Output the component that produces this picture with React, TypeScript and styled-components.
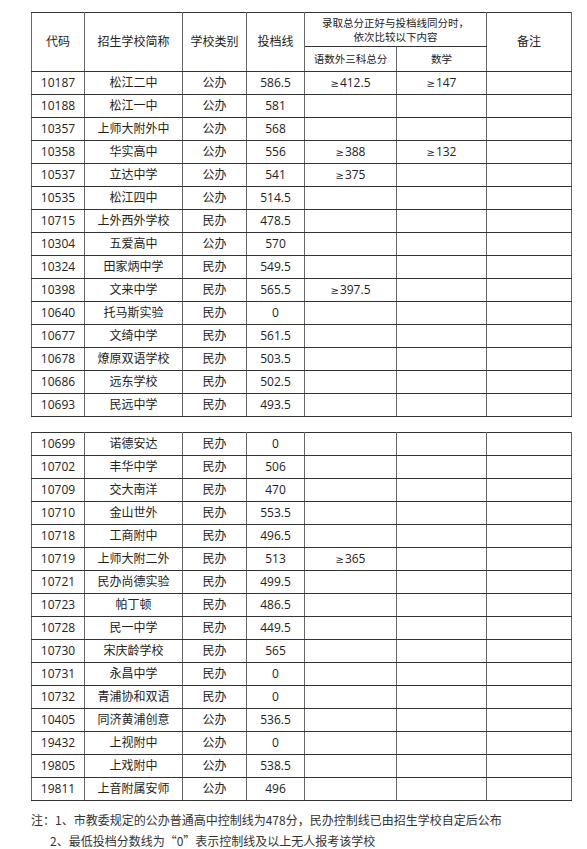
import React from "react";
import styled, { createGlobalStyle } from "styled-components";

type Row = {
  code: string;
  name: string;
  kind: string;
  line: string;
  total?: string;
  math?: string;
};

const firstRows: Row[] = [
  { code: "10187", name: "松江二中", kind: "公办", line: "586.5", total: "≥412.5", math: "≥147" },
  { code: "10188", name: "松江一中", kind: "公办", line: "581" },
  { code: "10357", name: "上师大附外中", kind: "公办", line: "568" },
  { code: "10358", name: "华实高中", kind: "公办", line: "556", total: "≥388", math: "≥132" },
  { code: "10537", name: "立达中学", kind: "公办", line: "541", total: "≥375" },
  { code: "10535", name: "松江四中", kind: "公办", line: "514.5" },
  { code: "10715", name: "上外西外学校", kind: "民办", line: "478.5" },
  { code: "10304", name: "五爱高中", kind: "公办", line: "570" },
  { code: "10324", name: "田家炳中学", kind: "民办", line: "549.5" },
  { code: "10398", name: "文来中学", kind: "民办", line: "565.5", total: "≥397.5" },
  { code: "10640", name: "托马斯实验", kind: "民办", line: "0" },
  { code: "10677", name: "文绮中学", kind: "民办", line: "561.5" },
  { code: "10678", name: "燎原双语学校", kind: "民办", line: "503.5" },
  { code: "10686", name: "远东学校", kind: "民办", line: "502.5" },
  { code: "10693", name: "民远中学", kind: "民办", line: "493.5" },
];

const secondRows: Row[] = [
  { code: "10699", name: "诺德安达", kind: "民办", line: "0" },
  { code: "10702", name: "丰华中学", kind: "民办", line: "506" },
  { code: "10709", name: "交大南洋", kind: "民办", line: "470" },
  { code: "10710", name: "金山世外", kind: "民办", line: "553.5" },
  { code: "10718", name: "工商附中", kind: "民办", line: "496.5" },
  { code: "10719", name: "上师大附二外", kind: "民办", line: "513", total: "≥365" },
  { code: "10721", name: "民办尚德实验", kind: "民办", line: "499.5" },
  { code: "10723", name: "帕丁顿", kind: "民办", line: "486.5" },
  { code: "10728", name: "民一中学", kind: "民办", line: "449.5" },
  { code: "10730", name: "宋庆龄学校", kind: "民办", line: "565" },
  { code: "10731", name: "永昌中学", kind: "民办", line: "0" },
  { code: "10732", name: "青浦协和双语", kind: "民办", line: "0" },
  { code: "10405", name: "同济黄浦创意", kind: "公办", line: "536.5" },
  { code: "19432", name: "上视附中", kind: "公办", line: "0" },
  { code: "19805", name: "上戏附中", kind: "公办", line: "538.5" },
  { code: "19811", name: "上音附属安师", kind: "公办", line: "496" },
];

const colWidths = [53, 98, 64, 58, 92, 90, 85];

const GlobalStyle = createGlobalStyle`
  html, body {
    margin: 0;
    padding: 0;
    background: #fff;
  }
  body {
    font-family: "Open Sans", "DejaVu Sans", "Noto Sans CJK SC", sans-serif;
    color: #222;
  }
`;

const Page = styled.div`
  display: flex;
  flex-direction: column;
  padding: 12px 0 0 31px;
  width: 540px;
`;

const Table = styled.table<{ $gap?: number }>`
  border-collapse: collapse;
  table-layout: fixed;
  width: 540px;
  margin-bottom: ${({ $gap }) => $gap ?? 0}px;
  border: 1px solid #555;
`;

const Cell = styled.td<{ $h?: number; $small?: boolean }>`
  height: ${({ $h }) => $h ?? 22}px;
  padding: 0;
  text-align: center;
  vertical-align: middle;
  font-size: ${({ $small }) => ($small ? 10.5 : 12)}px;
  line-height: ${({ $small }) => ($small ? 14 : 16)}px;
  border-top: 1px solid #333;
  border-bottom: 1px solid #333;
  border-left: 1px solid #666;
  border-right: 1px solid #666;
  color: #222;
  white-space: nowrap;
`;

const HeadCell = styled(Cell).attrs({ as: "th" })`
  font-weight: normal;
`;

const Ge = styled.span`
  font-family: "DejaVu Sans", sans-serif;
  font-size: 10px;
  margin-right: 1px;
`;

const Notes = styled.div`
  display: flex;
  flex-direction: column;
  gap: 5px;
  padding-top: 11px;
  font-family: "Noto Sans CJK SC", sans-serif;
  font-size: 12px;
  line-height: 16px;
  color: #333;
`;

const NoteLine = styled.div<{ $indent?: number }>`
  padding-left: ${({ $indent }) => $indent ?? 0}px;
  white-space: nowrap;
`;

const ColGroup = () => (
  <colgroup>
    {colWidths.map((w, i) => (
      <col key={i} style={{ width: w }} />
    ))}
  </colgroup>
);

const Score = ({ value }: { value?: string }) => {
  if (!value) return null;
  return (
    <>
      <Ge>≥</Ge>
      {value.replace("≥", "")}
    </>
  );
};

const Body = ({ rows }: { rows: Row[] }) => (
  <tbody>
    {rows.map((r) => (
      <tr key={r.code}>
        <Cell>{r.code}</Cell>
        <Cell>{r.name}</Cell>
        <Cell>{r.kind}</Cell>
        <Cell>{r.line}</Cell>
        <Cell>
          <Score value={r.total} />
        </Cell>
        <Cell>
          <Score value={r.math} />
        </Cell>
        <Cell />
      </tr>
    ))}
  </tbody>
);

export default function App() {
  return (
    <>
      <GlobalStyle />
      <Page>
        <Table $gap={15}>
          <ColGroup />
          <thead>
            <tr>
              <HeadCell rowSpan={2}>代码</HeadCell>
              <HeadCell rowSpan={2}>招生学校简称</HeadCell>
              <HeadCell rowSpan={2}>学校类别</HeadCell>
              <HeadCell rowSpan={2}>投档线</HeadCell>
              <HeadCell colSpan={2} $h={33} $small>
                录取总分正好与投档线同分时，
                <br />
                依次比较以下内容
              </HeadCell>
              <HeadCell rowSpan={2}>备注</HeadCell>
            </tr>
            <tr>
              <HeadCell $h={24} $small>
                语数外三科总分
              </HeadCell>
              <HeadCell $h={24} $small>
                数学
              </HeadCell>
            </tr>
          </thead>
          <Body rows={firstRows} />
        </Table>
        <Table>
          <ColGroup />
          <Body rows={secondRows} />
        </Table>
        <Notes>
          <NoteLine>注：1、市教委规定的公办普通高中控制线为478分，民办控制线已由招生学校自定后公布</NoteLine>
          <NoteLine $indent={19}>2、最低投档分数线为“0”表示控制线及以上无人报考该学校</NoteLine>
        </Notes>
      </Page>
    </>
  );
}
